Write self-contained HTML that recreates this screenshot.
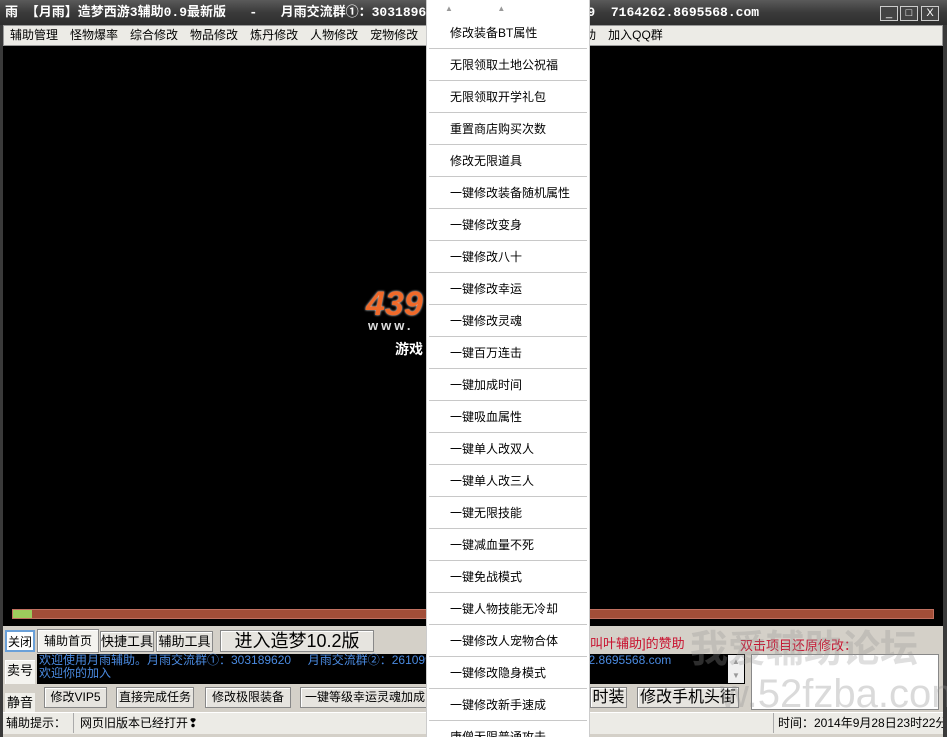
<!DOCTYPE html>
<html><head><meta charset="utf-8"><style>
*{margin:0;padding:0;box-sizing:border-box}
html,body{width:947px;height:737px;overflow:hidden}
body{position:relative;background:#d4d0c8;font-family:"Liberation Sans","Noto Sans CJK SC",sans-serif;font-size:12px;color:#000}
.abs{position:absolute}
#title{left:0;top:0;width:947px;height:25px;background:linear-gradient(#5a5a5a,#3a3a3a 50%,#2e2e2e);color:#fff;font-weight:bold;font-size:13px;line-height:25px;padding-left:5px;white-space:nowrap;font-family:"Liberation Mono","Noto Sans CJK SC",monospace}
.wb{top:6px;width:18px;height:15px;border:1px solid #ccc;background:#444;color:#fff;font-size:11px;line-height:13px;text-align:center}
#menu{left:3px;top:25px;width:940px;height:21px;background:#ecebe6;border:1px solid #999;line-height:19px;white-space:nowrap;font-size:12px}
#menu span{margin:0 6px}
#black{left:3px;top:46px;width:940px;height:580px;background:#000}
#side{left:0;top:25px;width:3px;height:712px;background:#3a3a3a}
#side2{left:943px;top:25px;width:4px;height:712px;background:#3a3a3a}
.btn{background:#e6e4df;border:1px solid #888;box-shadow:inset 1px 1px #fff;text-align:center;white-space:nowrap}
#dd{left:426px;top:0;width:164px;height:737px;overflow:hidden;background:#fff;border-left:1px solid #ccc;border-right:1px solid #ccc}
#dd div{height:32px;border-bottom:1px solid #c8c8c8;line-height:33px;padding-left:21px;font-size:12px;margin:0 2px}
</style></head><body>
<div id="title" class="abs">雨 【月雨】造梦西游3辅助0.9最新版&nbsp;&nbsp;&nbsp;-&nbsp;&nbsp;&nbsp;月雨交流群①：303189620&nbsp;&nbsp;月雨交流群②：261099&nbsp;&nbsp;7164262.8695568.com</div>
<div class="abs wb" style="left:880px">_</div><div class="abs wb" style="left:900px">□</div><div class="abs wb" style="left:921px">X</div>
<div id="side" class="abs"></div><div id="side2" class="abs"></div>
<div id="menu" class="abs"><span>辅助管理</span><span>怪物爆率</span><span>综合修改</span><span>物品修改</span><span>炼丹修改</span><span>人物修改</span><span>宠物修改</span><span style="margin-left:160px">助</span><span>加入QQ群</span></div>
<div id="black" class="abs"></div>
<div class="abs" style="left:366px;top:285px;color:#f06a2a;font-size:34px;font-weight:bold;font-style:italic;text-shadow:0 0 2px #fff">439</div>
<div class="abs" style="left:368px;top:318px;color:#ddd;font-size:13px;font-weight:bold;letter-spacing:3px">www.</div>
<div class="abs" style="left:395px;top:339px;color:#fff;font-size:14px;font-weight:bold">游戏</div>
<div class="abs" style="left:12px;top:609px;width:922px;height:10px;background:#a24e38;border:1px solid #c07060"></div>
<div class="abs" style="left:13px;top:610px;width:19px;height:8px;background:#9ccc5c"></div>
<div class="abs btn" style="left:5px;top:630px;width:30px;height:22px;line-height:20px;border:2px solid #6aa0d8;background:#fff">关闭</div>
<div class="abs btn" style="left:37px;top:629px;width:62px;height:24px;line-height:22px;background:#f4f3ef">辅助首页</div>
<div class="abs btn" style="left:100px;top:631px;width:54px;height:21px;line-height:19px;font-size:13px">快捷工具</div>
<div class="abs btn" style="left:156px;top:631px;width:57px;height:21px;line-height:19px;font-size:13px">辅助工具</div>
<div class="abs btn" style="left:220px;top:630px;width:154px;height:22px;line-height:20px;font-size:18px">进入造梦10.2版</div>
<div class="abs" style="left:590px;top:633px;color:#c8102e;font-size:13px">叫叶辅助]的赞助</div>
<div class="abs" style="left:740px;top:635px;color:#c8102e;font-size:13px">双击项目还原修改：</div>
<div class="abs btn" style="left:5px;top:660px;width:30px;height:24px;line-height:22px;font-size:13px;background:#f4f3ef;border:none">卖号</div>
<div class="abs" style="left:37px;top:654px;width:708px;height:30px;background:#000;color:#4a8ae0;font-size:12px;line-height:13px;white-space:nowrap;padding-left:2px">欢迎使用月雨辅助。月雨交流群①：303189620&nbsp;&nbsp;&nbsp;&nbsp;&nbsp;月雨交流群②：261099&nbsp;&nbsp;&nbsp;&nbsp;&nbsp;&nbsp;&nbsp;&nbsp;&nbsp;&nbsp;&nbsp;&nbsp;&nbsp;&nbsp;&nbsp;&nbsp;&nbsp;&nbsp;&nbsp;&nbsp;&nbsp;&nbsp;&nbsp;&nbsp;&nbsp;&nbsp;&nbsp;&nbsp;&nbsp;&nbsp;&nbsp;&nbsp;&nbsp;&nbsp;&nbsp;7164262.8695568.com<br>欢迎你的加入</div>
<div class="abs" style="left:728px;top:655px;width:16px;height:28px;background:#f0f0f0;color:#999;font-size:8px;text-align:center;line-height:14px">▲<br>▼</div>
<div class="abs" style="left:751px;top:654px;width:188px;height:56px;background:#fff;border:1px solid #888"></div>
<div class="abs btn" style="left:5px;top:693px;width:30px;height:20px;line-height:20px;font-size:13px;border:none;box-shadow:none;background:#f0efea">静音</div>
<div class="abs btn" style="left:44px;top:687px;width:63px;height:21px;line-height:19px">修改VIP5</div>
<div class="abs btn" style="left:116px;top:687px;width:78px;height:21px;line-height:19px">直接完成任务</div>
<div class="abs btn" style="left:205px;top:687px;width:86px;height:21px;line-height:19px">修改极限装备</div>
<div class="abs btn" style="left:300px;top:687px;width:130px;height:21px;line-height:19px;overflow:hidden">一键等级幸运灵魂加成</div>
<div class="abs btn" style="left:590px;top:687px;width:37px;height:21px;line-height:19px;font-size:16px">时装</div>
<div class="abs btn" style="left:637px;top:687px;width:102px;height:21px;line-height:19px;font-size:16px">修改手机头街</div>
<div class="abs" style="left:3px;top:712px;width:940px;height:22px;background:#ecebe6;border-top:1px solid #fff;line-height:20px"></div>
<div class="abs" style="left:6px;top:713px;line-height:20px">辅助提示：</div>
<div class="abs" style="left:73px;top:713px;width:1px;height:20px;background:#aaa"></div>
<div class="abs" style="left:80px;top:713px;line-height:20px">网页旧版本已经打开❢</div>
<div class="abs" style="left:773px;top:713px;width:1px;height:20px;background:#aaa"></div>
<div class="abs" style="left:778px;top:713px;line-height:20px;white-space:nowrap;width:165px;overflow:hidden">时间：2014年9月28日23时22分</div>
<div class="abs" style="left:690px;top:618px;font-size:38px;font-weight:bold;color:rgba(150,150,150,.3);white-space:nowrap">我爱辅助论坛</div>
<div class="abs" style="left:720px;top:672px;font-size:40px;color:rgba(150,150,150,.35);white-space:nowrap">w.52fzba.com</div>
<div id="dd" class="abs">
<div style="height:17px;border:none;line-height:17px;padding-left:16px;font-size:8px;color:#999">▲&nbsp;&nbsp;&nbsp;&nbsp;&nbsp;&nbsp;&nbsp;&nbsp;&nbsp;&nbsp;&nbsp;&nbsp;&nbsp;&nbsp;&nbsp;&nbsp;&nbsp;&nbsp;&nbsp;&nbsp;▲</div>
<div>修改装备BT属性</div><div>无限领取土地公祝福</div><div>无限领取开学礼包</div><div>重置商店购买次数</div><div>修改无限道具</div><div>一键修改装备随机属性</div><div>一键修改变身</div><div>一键修改八十</div><div>一键修改幸运</div><div>一键修改灵魂</div><div>一键百万连击</div><div>一键加成时间</div><div>一键吸血属性</div><div>一键单人改双人</div><div>一键单人改三人</div><div>一键无限技能</div><div>一键减血量不死</div><div>一键免战模式</div><div>一键人物技能无冷却</div><div>一键修改人宠物合体</div><div>一键修改隐身模式</div><div>一键修改新手速成</div><div>唐僧无限普通攻击</div>
</div>
</body></html>
